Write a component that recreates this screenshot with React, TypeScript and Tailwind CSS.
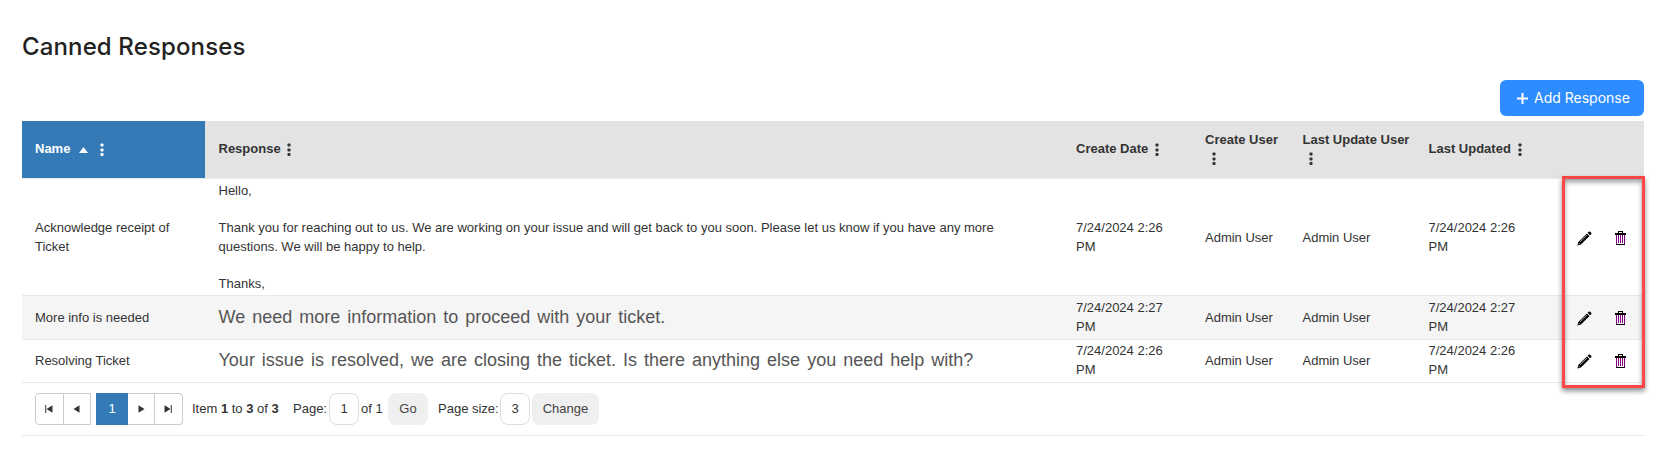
import React from "react"

interface CannedResponse {
  name: string
  body: string[]
  large?: boolean
  date: string
  rowClass: string
  textClass: string
  dateClass: string
  bodyClass: string
}

const RESPONSES: CannedResponse[] = [
  {
    name: "Acknowledge receipt of Ticket",
    body: [
      "Hello,",
      "Thank you for reaching out to us. We are working on your issue and will get back to you soon. Please let us know if you have any more questions. We will be happy to help.",
      "Thanks,",
    ],
    date: "7/24/2024 2:26 PM",
    rowClass: "h-[117px]",
    textClass: "pt-0.5",
    dateClass: "pt-0.5",
    bodyClass: "pt-px",
  },
  {
    name: "More info is needed",
    body: ["We need more information to proceed with your ticket."],
    large: true,
    date: "7/24/2024 2:27 PM",
    rowClass: "h-11 bg-[#f5f5f5]",
    textClass: "pt-0.5",
    dateClass: "",
    bodyClass: "",
  },
  {
    name: "Resolving Ticket",
    body: ["Your issue is resolved, we are closing the ticket. Is there anything else you need help with?"],
    large: true,
    date: "7/24/2024 2:26 PM",
    rowClass: "h-[43px]",
    textClass: "",
    dateClass: "",
    bodyClass: "pb-0.5",
  },
]

const GRID = "grid grid-cols-[183px_858px_129px_97.5px_126px_148.5px_80px] items-center border-b border-[#e9e9e9]"

const Dots: React.FC<{ className?: string }> = ({ className = "" }) => (
  <svg className={`inline-block ${className}`} width="4" height="13" viewBox="0 0 4 13" fill="currentColor">
    <rect x=".5" y=".5" width="3" height="3" rx=".8" />
    <rect x=".5" y="5.5" width="3" height="3" rx=".8" />
    <rect x=".5" y="10" width="3" height="3" rx=".8" />
  </svg>
)

const PencilIcon: React.FC = () => (
  <svg width="15" height="15" viewBox="0 0 15 15">
    <path d="M.4 14.6l.9-3.7L9.9 2.6l2.6 2.5-8.6 8.4z" fill="#000" />
    <path d="M10.6 1.8L11.7.8q.8-.6 1.5 0l1 1q.6.7 0 1.4l-1.1 1.1z" fill="#000" />
    <path d="M3 10.7l6.9-6.7" stroke="#c8c8c8" strokeWidth=".9" />
    <path d="M1.9 11.9l1 1-1.3.4z" fill="#eee" />
  </svg>
)

const TrashIcon: React.FC = () => (
  <svg width="11" height="15" viewBox="0 0 11 15" shapeRendering="crispEdges">
    <path d="M3 0h5v1H3zM3 1h1v1H3zM7 1h1v1H7zM0 2h11v2H0z" fill="#000" />
    <path d="M1 4h1v9H1zM9 4h1v9H9zM3 4h1v8H3zM5 4h1v8H5zM7 4h1v8H7z" fill="#800080" />
    <path d="M1 13h9v1H1z" fill="#000" />
  </svg>
)

const Arrow: React.FC<{ left?: boolean; bar?: boolean }> = ({ left, bar }) => (
  <svg className={left ? "-scale-x-100" : ""} width="8" height="8" viewBox="0 0 8 8" fill="#333">
    <path d={bar ? "M.5.3l6 3.7-6 3.7zM6.8 0h1v8h-1z" : "M1.5.3l6 3.7-6 3.7z"} />
  </svg>
)

const Header: React.FC = () => (
  <div className={`${GRID} h-[58px] bg-[#e3e3e3] font-bold`}>
    <div className="flex h-full items-center bg-[#337ab7] pb-px pl-[13px] text-white">
      Name
      <svg className="ml-[9px] mt-px" width="9" height="6" viewBox="0 0 9 6" fill="currentColor">
        <path d="M4.5 0L9 6H0z" />
      </svg>
      <Dots className="ml-[11.5px]" />
    </div>
    <div className="flex items-center pb-px pl-[13.5px]">
      Response
      <Dots className="ml-[6.5px] mt-px" />
    </div>
    <div className="flex items-center pb-px pl-[13px]">
      Create Date
      <Dots className="ml-[7px] mt-px" />
    </div>
    <div className="pl-[13px] leading-[18.57px]">
      Create User
      <div className="flex h-[19px] items-center pb-px pl-[7px]"><Dots /></div>
    </div>
    <div className="whitespace-nowrap pl-[13px] leading-[18.57px]">
      Last Update User
      <div className="flex h-[19px] items-center pb-px pl-[6.5px]"><Dots /></div>
    </div>
    <div className="flex items-center pb-px pl-[13px]">
      Last Updated
      <Dots className="ml-[7px] mt-px" />
    </div>
    <div />
  </div>
)

const Row: React.FC<{ item: CannedResponse }> = ({ item }) => (
  <div className={`${GRID} ${item.rowClass}`}>
    <div className={`pl-[13px] pr-6 ${item.textClass}`}>{item.name}</div>
    <div
      className={`${item.bodyClass} ${
        item.large
          ? "whitespace-nowrap pl-[13.5px] text-[18px] text-[#555] [word-spacing:2px]"
          : "space-y-[18.57px] pl-[13.5px] pr-[60px]"
      }`}
    >
      {item.body.map((p) => (
        <p key={p}>{p}</p>
      ))}
    </div>
    <div className={`pl-[13px] pr-6 ${item.dateClass}`}>{item.date}</div>
    <div className={`pl-[13px] ${item.textClass}`}>Admin User</div>
    <div className={`pl-[13px] ${item.textClass}`}>Admin User</div>
    <div className={`pl-[13px] pr-11 ${item.dateClass}`}>{item.date}</div>
    <div className={`flex items-center gap-[23px] pl-[13px] ${item.textClass}`}>
      <PencilIcon />
      <TrashIcon />
    </div>
  </div>
)

const Pager: React.FC = () => (
  <div className="flex h-[53px] items-center border-b border-[#e9e9e9] pl-[13px]">
    <div className="flex h-8 w-[56px] rounded-l border border-[#ccc]">
      <span className="flex w-[28px] items-center justify-center border-r border-[#ccc] pr-px"><Arrow left bar /></span>
      <span className="flex flex-1 items-center justify-center"><Arrow left /></span>
    </div>
    <span className="ml-[5px] flex h-8 w-8 items-center justify-center bg-[#337ab7] text-white">1</span>
    <div className="flex h-8 w-[55px] rounded-r border border-l-0 border-[#ccc]">
      <span className="flex w-[27px] items-center justify-center border-r border-[#ccc]"><Arrow /></span>
      <span className="flex flex-1 items-center justify-center pr-px"><Arrow bar /></span>
    </div>
    <span className="ml-[9px] w-[101px] whitespace-nowrap">
      Item <b>1</b> to <b>3</b> of <b>3</b>
    </span>
    <span className="w-9">Page:</span>
    <span className="flex h-8 w-[30px] items-center justify-center rounded-lg border border-[#ddd]">1</span>
    <span className="ml-0.5 w-[27px] whitespace-nowrap">of 1</span>
    <span className="flex h-8 w-10 items-center justify-center rounded-lg bg-[#efefef] text-[#444]">Go</span>
    <span className="ml-2.5 w-[62px] whitespace-nowrap">Page size:</span>
    <span className="flex h-8 w-[30px] items-center justify-center rounded-lg border border-[#ddd]">3</span>
    <span className="ml-0.5 flex h-8 w-[67px] items-center justify-center rounded-lg bg-[#efefef] text-[#444]">Change</span>
  </div>
)

export default function App() {
  return (
    <main className="h-[457px] w-[1673px] overflow-hidden bg-white px-[22px] font-['Liberation_Sans',Arial,sans-serif] text-[13px] leading-[18.57px] text-[#333]">
      <h1 className="pt-[31px] font-['Inter',sans-serif] text-[24px] font-medium leading-8 tracking-[0.13px] text-[#222]">Canned Responses</h1>
      <div className="mt-[17px] flex w-[1622px] justify-end">
        <button className="flex h-9 w-36 items-center rounded-md bg-[#2d8cff] pl-[17px] font-['Inter',sans-serif] text-[14px] text-white">
          <svg width="11" height="11" viewBox="0 0 11 11" fill="none" stroke="currentColor" strokeWidth="2">
            <path d="M5.5 0v11M0 5.5h11" />
          </svg>
          <span className="ml-1.5 whitespace-nowrap">Add Response</span>
        </button>
      </div>
      <div className="relative mt-[5px] w-[1622px]">
        <Header />
        {RESPONSES.map((item) => (
          <Row key={item.name} item={item} />
        ))}
        <Pager />
        <div className="pointer-events-none absolute -right-px top-[55px] h-[212px] w-[83px] border-3 border-[#ff4545] shadow-[0_3px_5px_rgba(0,0,0,0.45),inset_0_3px_5px_rgba(0,0,0,0.4)]" />
      </div>
    </main>
  )
}
